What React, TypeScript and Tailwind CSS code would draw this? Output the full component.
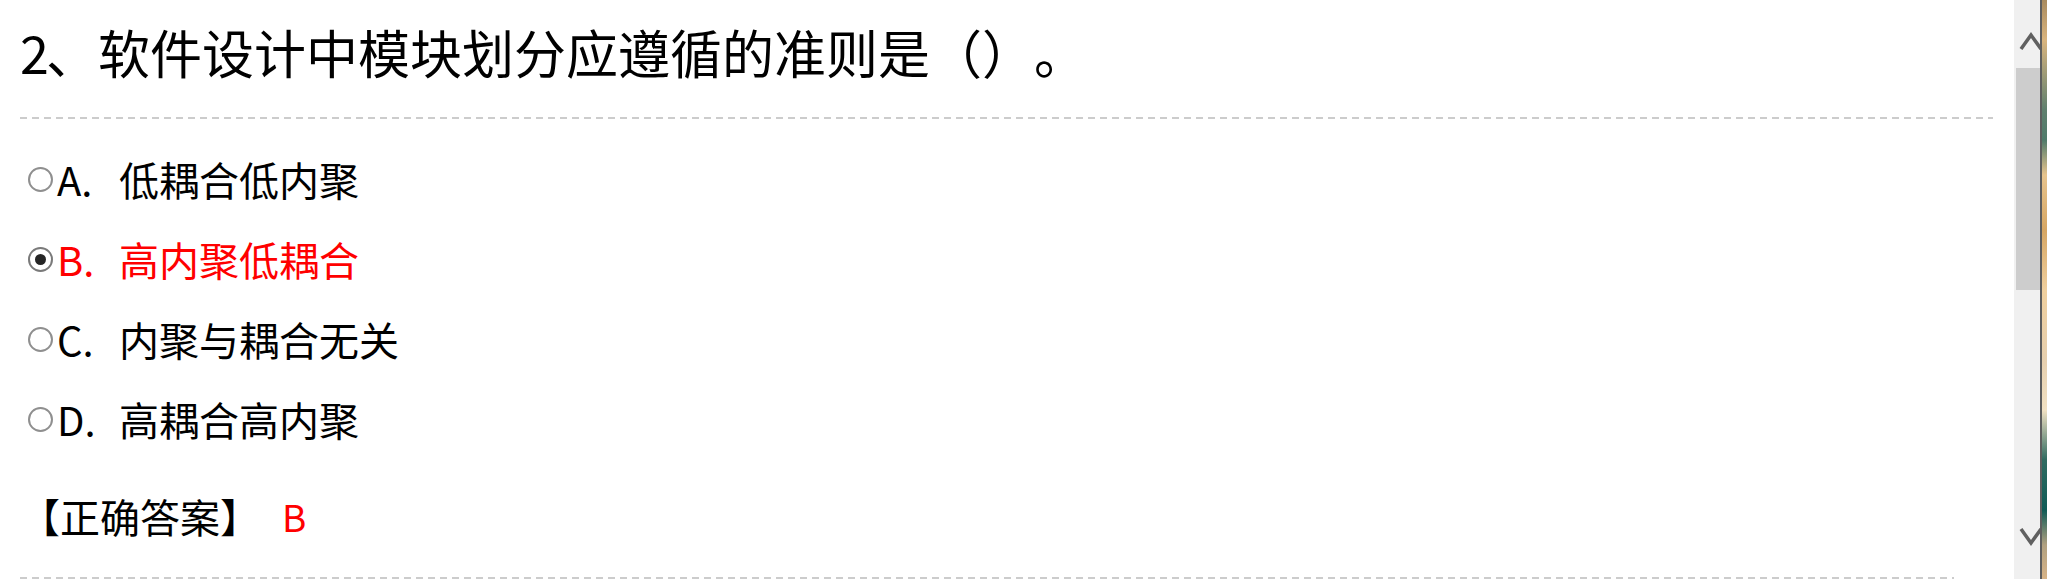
import React from "react";

const options = [
  { key: "A", text: "低耦合低内聚", checked: false },
  { key: "B", text: "高内聚低耦合", checked: true },
  { key: "C", text: "内聚与耦合无关", checked: false },
  { key: "D", text: "高耦合高内聚", checked: false },
];

function Radio({ checked }: { checked: boolean }) {
  return (
    <span
      className={
        checked
          ? "ml-[8px] mr-[4px] flex h-[25px] w-[25px] shrink-0 items-center justify-center rounded-full border-2 border-[#7a7a7a] bg-white"
          : "ml-[8px] mr-[4px] flex h-[25px] w-[25px] shrink-0 items-center justify-center rounded-full border-2 border-[#8f8f8f] bg-white"
      }
    >
      {checked && <span className="block h-[11px] w-[11px] rounded-full bg-[#262626]" />}
    </span>
  );
}

export default function App() {
  return (
    <div className="flex h-[579px] w-[2047px] overflow-hidden bg-white font-['Noto_Sans_CJK_SC',sans-serif] text-black [text-spacing-trim:space-all]">
      <div className="flex min-w-0 flex-1 flex-col">
        <div className="h-[117px] pl-[20px] pt-[26px] text-[52px] leading-[52px] whitespace-nowrap [text-spacing-trim:space-all]">
          <span className="inline-block w-[26px]">2</span>
          <span>、软件设计中模块划分应遵循的准则是</span>
          <span className="inline-block w-[52px]">（</span>
          <span className="inline-block w-[52px]">）</span>
          <span className="inline-block w-[52px]">。</span>
        </div>
        <div className="ml-[20px] mr-[21px] h-[2px] bg-[repeating-linear-gradient(to_right,#cccccc_0px,#cccccc_7px,transparent_7px,transparent_12px)]" />
        <div className="mt-[20px] flex flex-col">
          {options.map((o) => (
            <div
              key={o.key}
              className={
                o.checked
                  ? "flex h-[80px] items-center pl-[20px] text-[40px] leading-[40px] text-[#ff0000]"
                  : "flex h-[80px] items-center pl-[20px] text-[40px] leading-[40px]"
              }
            >
              <Radio checked={o.checked} />
              <span className="inline-block w-[40px] whitespace-nowrap">{o.key}.</span>
              <span className="inline-block w-[22px]" />
              <span className="whitespace-nowrap">{o.text}</span>
            </div>
          ))}
        </div>
        <div className="mt-[17px] flex h-[80px] items-center pl-[20px] text-[40px] leading-[40px] whitespace-nowrap">
          <span className="inline-block w-[40px]">【</span>
          <span>正确答案</span>
          <span className="inline-block w-[40px]">】</span>
          <span className="ml-[22px] text-[37px] text-[#ff0000]">B</span>
        </div>
        <div className="mt-[21px] ml-[20px] mr-[60px] h-[2px] bg-[repeating-linear-gradient(to_right,#cccccc_0px,#cccccc_7px,transparent_7px,transparent_12px)]" />
      </div>
      <div className="flex w-[26px] shrink-0 flex-col overflow-hidden bg-[#f0f0f0]">
        <div className="h-[68px] shrink-0">
          <svg width="28" height="68" viewBox="0 0 28 68" className="block">
            <polyline points="7,49 17,35 27,49" fill="none" stroke="#606060" strokeWidth="3.5" />
          </svg>
        </div>
        <div className="ml-[2px] h-[222px] shrink-0 bg-[#cdcdcd]" />
        <div className="flex-1" />
        <div className="h-[60px] shrink-0">
          <svg width="28" height="60" viewBox="0 0 28 60" className="block">
            <polyline points="7,10 17,24 27,10" fill="none" stroke="#606060" strokeWidth="3.5" />
          </svg>
        </div>
      </div>
      <div className="w-[2px] shrink-0 bg-[#5e5e5e]" />
      <div className="w-[5px] shrink-0 bg-[linear-gradient(to_bottom,#a88a5e_0px,#d9b47e_40px,#5f7f6e_110px,#4f7a6a_140px,#e7c48e_175px,#d6a663_230px,#efcf9e_290px,#e6cfae_360px,#f1e1c3_410px,#2f6a60_460px,#0f5a55_510px,#b0a080_545px,#d8b488_579px)]" />
    </div>
  );
}
